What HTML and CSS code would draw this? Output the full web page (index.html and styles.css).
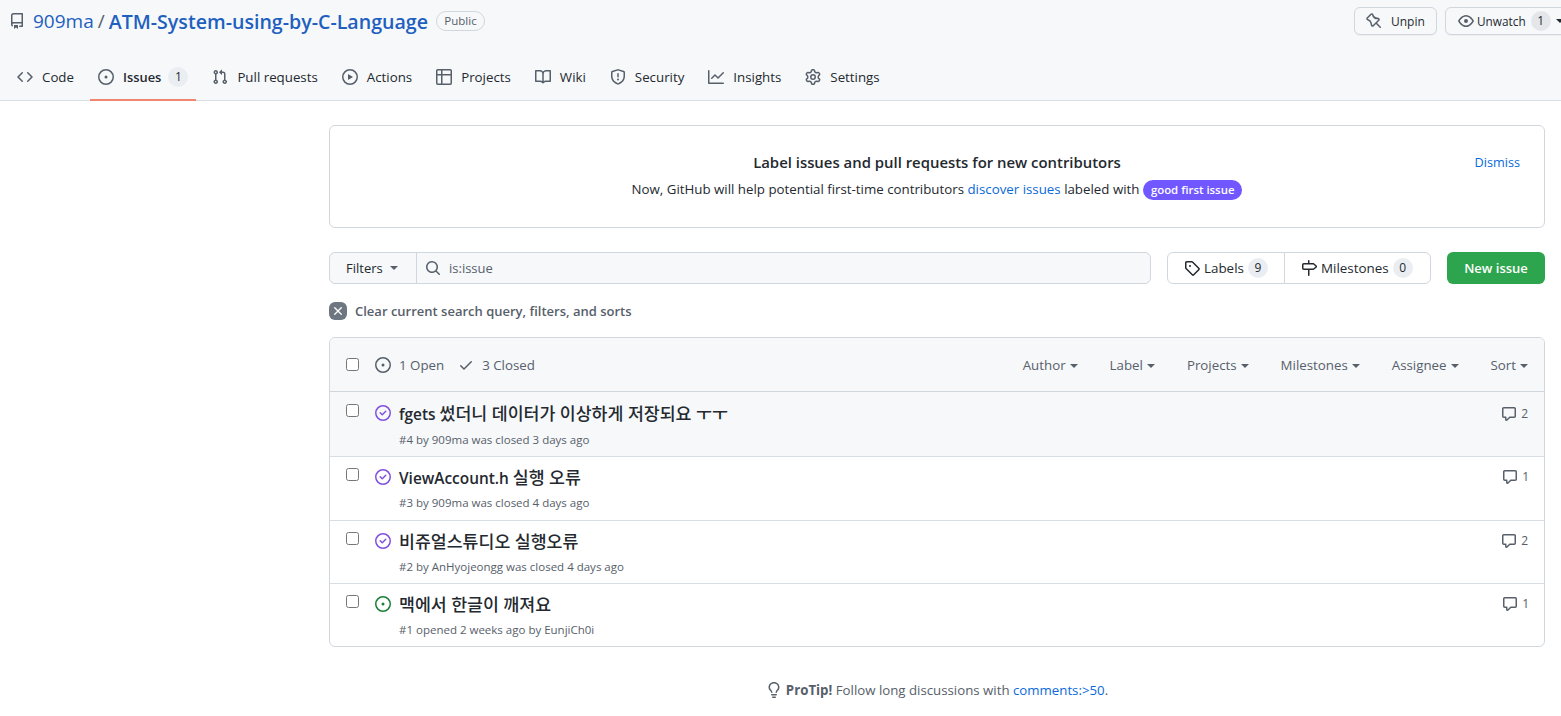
FILE: index.html
```html
<!DOCTYPE html>
<html lang="ko">
<head>
    <meta charset="UTF-8">
    <title>Issues - 909ma/ATM-System-using-by-C-Language</title>
    <link rel="stylesheet" href="styles.css">
</head>
<body>
    <!-- Icon sprite -->
    <svg class="sprite" xmlns="http://www.w3.org/2000/svg">
        <symbol id="i-repo" viewBox="0 0 16 16"><path fill-rule="evenodd" d="M2 2.5A2.5 2.5 0 014.5 0h8.75a.75.75 0 01.75.75v12.5a.75.75 0 01-.75.75h-2.5a.75.75 0 110-1.5h1.75v-2h-8a1 1 0 00-.714 1.7.75.75 0 01-1.072 1.05A2.495 2.495 0 012 11.5v-9zm10.5-1V9h-8c-.356 0-.694.074-1 .208V2.5a1 1 0 011-1h8zM5 12.25v3.25a.25.25 0 00.4.2l1.45-1.087a.25.25 0 01.3 0L8.6 15.7a.25.25 0 00.4-.2v-3.25a.25.25 0 00-.25-.25h-3.5a.25.25 0 00-.25.25z"/></symbol>
        <symbol id="i-code" viewBox="0 0 16 16"><path d="M4.72 3.22a.75.75 0 011.06 1.06L2.06 8l3.72 3.72a.75.75 0 11-1.06 1.06L.47 8.53a.75.75 0 010-1.06l4.25-4.25zm6.56 0a.75.75 0 10-1.06 1.06L13.94 8l-3.72 3.72a.75.75 0 101.06 1.06l4.25-4.25a.75.75 0 000-1.06l-4.25-4.25z"/></symbol>
        <symbol id="i-issue" viewBox="0 0 16 16"><path d="M8 9.5a1.5 1.5 0 100-3 1.5 1.5 0 000 3z"/><path fill-rule="evenodd" d="M8 0a8 8 0 100 16A8 8 0 008 0zM1.5 8a6.5 6.5 0 1113 0 6.5 6.5 0 01-13 0z"/></symbol>
        <symbol id="i-pr" viewBox="0 0 16 16"><path fill-rule="evenodd" d="M7.177 3.073L9.573.677A.25.25 0 0110 .854v4.792a.25.25 0 01-.427.177L7.177 3.427a.25.25 0 010-.354zM3.75 2.5a.75.75 0 100 1.5.75.75 0 000-1.5zm-2.25.75a2.25 2.25 0 113 2.122v5.256a2.251 2.251 0 11-1.5 0V5.372A2.25 2.25 0 011.5 3.25zM11 2.5h-1V4h1a1 1 0 011 1v5.628a2.251 2.251 0 101.5 0V5A2.5 2.5 0 0011 2.5zm1 10.25a.75.75 0 111.5 0 .75.75 0 01-1.5 0zM3.75 12a.75.75 0 100 1.5.75.75 0 000-1.5z"/></symbol>
        <symbol id="i-play" viewBox="0 0 16 16"><path fill-rule="evenodd" d="M1.5 8a6.5 6.5 0 1113 0 6.5 6.5 0 01-13 0zM8 0a8 8 0 100 16A8 8 0 008 0zM6.379 5.227A.25.25 0 006 5.442v5.117a.25.25 0 00.379.214l4.264-2.559a.25.25 0 000-.428L6.379 5.227z"/></symbol>
        <symbol id="i-table" viewBox="0 0 16 16"><path fill-rule="evenodd" d="M0 1.75C0 .784.784 0 1.75 0h12.5C15.216 0 16 .784 16 1.75v12.5A1.75 1.75 0 0114.25 16H1.75A1.75 1.75 0 010 14.25V1.75zM1.5 6.5v7.75c0 .138.112.25.25.25H5v-8H1.5zM5 5H1.5V1.75a.25.25 0 01.25-.25H5V5zm1.5 1.5v8h7.75a.25.25 0 00.25-.25V6.5h-8zm8-1.5h-8V1.5h7.75a.25.25 0 01.25.25V5z"/></symbol>
        <symbol id="i-book" viewBox="0 0 16 16"><path fill-rule="evenodd" d="M0 1.75A.75.75 0 01.75 1h4.253c1.227 0 2.317.59 3 1.501A3.744 3.744 0 0111.006 1h4.245a.75.75 0 01.75.75v10.5a.75.75 0 01-.75.75h-4.507a2.25 2.25 0 00-1.591.659l-.622.621a.75.75 0 01-1.06 0l-.622-.621A2.25 2.25 0 005.258 13H.75a.75.75 0 01-.75-.75V1.75zm8.755 3a2.25 2.25 0 012.25-2.25H14.5v9h-3.757c-.71 0-1.4.201-1.992.572l.004-7.322zm-1.504 7.324l.004-5.073-.002-2.253A2.25 2.25 0 005.003 2.5H1.5v9h3.757a3.75 3.75 0 011.994.574z"/></symbol>
        <symbol id="i-shield" viewBox="0 0 16 16"><path fill-rule="evenodd" d="M7.467.133a1.75 1.75 0 011.066 0l5.25 1.68A1.75 1.75 0 0115 3.48V7c0 1.566-.32 3.182-1.303 4.682-.983 1.498-2.585 2.813-5.032 3.855a1.7 1.7 0 01-1.33 0c-2.447-1.042-4.049-2.357-5.032-3.855C1.32 10.182 1 8.566 1 7V3.48a1.75 1.75 0 011.217-1.667l5.25-1.68zm.61 1.429a.25.25 0 00-.153 0l-5.25 1.68a.25.25 0 00-.174.238V7c0 1.358.275 2.666 1.057 3.86.784 1.194 2.121 2.34 4.366 3.297a.2.2 0 00.154 0c2.245-.956 3.582-2.104 4.366-3.298C13.225 9.666 13.5 8.36 13.5 7V3.48a.25.25 0 00-.174-.237l-5.25-1.68zM9 10.5a1 1 0 11-2 0 1 1 0 012 0zm-.25-5.75a.75.75 0 10-1.5 0v3a.75.75 0 001.5 0v-3z"/></symbol>
        <symbol id="i-graph" viewBox="0 0 16 16"><path d="M1.5 1.75a.75.75 0 00-1.5 0v12.5c0 .414.336.75.75.75h14.5a.75.75 0 000-1.5H1.5V1.75zm14.28 2.53a.75.75 0 00-1.06-1.06L10 7.94 7.53 5.47a.75.75 0 00-1.06 0L3.22 8.72a.75.75 0 001.06 1.06L7 7.06l2.47 2.47a.75.75 0 001.06 0l5.25-5.25z"/></symbol>
        <symbol id="i-gear" viewBox="0 0 16 16"><path fill-rule="evenodd" d="M7.429 1.525a6.593 6.593 0 011.142 0c.036.003.108.036.137.146l.289 1.105c.147.56.55.967.997 1.189.174.086.341.183.501.29.417.278.97.423 1.53.27l1.102-.303c.11-.03.175.016.195.046.219.31.41.641.573.989.014.031.022.11-.059.19l-.815.806c-.411.406-.562.957-.53 1.456a4.588 4.588 0 010 .582c-.032.499.119 1.05.53 1.456l.815.806c.08.08.073.159.059.19a6.494 6.494 0 01-.573.99c-.02.029-.086.074-.195.045l-1.103-.303c-.559-.153-1.112-.008-1.529.27-.16.107-.327.204-.5.29-.449.222-.851.628-.998 1.189l-.289 1.105c-.029.11-.101.143-.137.146a6.613 6.613 0 01-1.142 0c-.036-.003-.108-.037-.137-.146l-.289-1.105c-.147-.56-.55-.967-.997-1.189a4.502 4.502 0 01-.501-.29c-.417-.278-.97-.423-1.53-.27l-1.102.303c-.11.03-.175-.016-.195-.046a6.492 6.492 0 01-.573-.989c-.014-.031-.022-.11.059-.19l.815-.806c.411-.406.562-.957.53-1.456a4.587 4.587 0 010-.582c.032-.499-.119-1.05-.53-1.456l-.815-.806c-.08-.08-.073-.159-.059-.19a6.44 6.44 0 01.573-.99c.02-.029.086-.075.195-.045l1.103.303c.559.153 1.112.008 1.529-.27.16-.107.327-.204.5-.29.449-.222.851-.628.998-1.189l.289-1.105c.029-.11.101-.143.137-.146zM8 0c-.236 0-.47.01-.701.03-.743.065-1.29.615-1.458 1.261l-.29 1.106c-.017.066-.078.158-.211.224a5.994 5.994 0 00-.668.386c-.123.082-.233.09-.3.071L3.27 2.776c-.644-.177-1.392.02-1.82.63a7.977 7.977 0 00-.704 1.217c-.315.675-.111 1.422.363 1.891l.815.806c.05.048.098.147.088.294a6.084 6.084 0 000 .772c.01.147-.038.246-.088.294l-.815.806c-.474.469-.678 1.216-.363 1.891.2.428.436.835.704 1.218.428.609 1.176.806 1.82.63l1.103-.303c.066-.019.176-.011.299.071.213.143.436.272.668.386.133.066.194.158.212.224l.289 1.106c.169.646.715 1.196 1.458 1.26a8.094 8.094 0 001.402 0c.743-.064 1.29-.614 1.458-1.26l.29-1.106c.017-.066.078-.158.211-.224a5.98 5.98 0 00.668-.386c.123-.082.233-.09.3-.071l1.102.302c.644.177 1.392-.02 1.82-.63.268-.382.505-.789.704-1.217.315-.675.111-1.422-.364-1.891l-.814-.806c-.05-.048-.098-.147-.088-.294a6.1 6.1 0 000-.772c-.01-.147.039-.246.088-.294l.814-.806c.475-.469.679-1.216.364-1.891a7.992 7.992 0 00-.704-1.218c-.428-.609-1.176-.806-1.82-.63l-1.103.303c-.066.019-.176.011-.299-.071a5.991 5.991 0 00-.668-.386c-.133-.066-.194-.158-.212-.224L10.16 1.29C9.99.645 9.444.095 8.701.031A8.094 8.094 0 008 0zm1.5 8a1.5 1.5 0 11-3 0 1.5 1.5 0 013 0zM11 8a3 3 0 11-6 0 3 3 0 016 0z"/></symbol>
        <symbol id="i-pin" viewBox="0 0 16 16"><path fill-rule="evenodd" d="M4.456.734a1.75 1.75 0 012.826.504l.613 1.327a3.081 3.081 0 002.084 1.707l2.454.584c1.332.317 1.8 1.972.832 2.94L11.06 10l3.72 3.72a.75.75 0 11-1.061 1.06L10 11.06l-2.204 2.205c-.968.968-2.623.5-2.94-.832l-.584-2.454a3.081 3.081 0 00-1.707-2.084l-1.327-.613a1.75 1.75 0 01-.504-2.826L4.456.734zM5.92 1.866a.25.25 0 00-.404-.072L1.794 5.516a.25.25 0 00.072.404l1.328.613A4.582 4.582 0 015.73 9.63l.584 2.454a.25.25 0 00.42.12l5.47-5.47a.25.25 0 00-.12-.42L9.63 6.13a4.581 4.581 0 01-3.098-2.537L5.92 1.866z"/></symbol>
        <symbol id="i-eye" viewBox="0 0 16 16"><path fill-rule="evenodd" d="M1.679 7.932c.412-.621 1.242-1.75 2.366-2.717C5.175 4.242 6.527 3.5 8 3.5c1.473 0 2.824.742 3.955 1.715 1.124.967 1.954 2.096 2.366 2.717a.119.119 0 010 .136c-.412.621-1.242 1.75-2.366 2.717C10.825 11.758 9.473 12.5 8 12.5c-1.473 0-2.824-.742-3.955-1.715C2.92 9.818 2.09 8.69 1.679 8.068a.119.119 0 010-.136zM8 2c-1.981 0-3.67.992-4.933 2.078C1.797 5.169.88 6.423.43 7.1a1.619 1.619 0 000 1.798c.45.678 1.367 1.932 2.637 3.024C4.329 13.008 6.019 14 8 14c1.981 0 3.67-.992 4.933-2.078 1.27-1.091 2.187-2.345 2.637-3.023a1.619 1.619 0 000-1.798c-.45-.678-1.367-1.932-2.637-3.023C11.671 2.992 9.981 2 8 2zm0 8a2 2 0 100-4 2 2 0 000 4z"/></symbol>
        <symbol id="i-search" viewBox="0 0 16 16"><path fill-rule="evenodd" d="M11.5 7a4.499 4.499 0 11-8.998 0A4.499 4.499 0 0111.5 7zm-.82 4.74a6 6 0 111.06-1.06l3.04 3.04a.75.75 0 11-1.06 1.06l-3.04-3.04z"/></symbol>
        <symbol id="i-tag" viewBox="0 0 16 16"><path fill-rule="evenodd" d="M2.5 7.775V2.75a.25.25 0 01.25-.25h5.025a.25.25 0 01.177.073l6.25 6.25a.25.25 0 010 .354l-5.025 5.025a.25.25 0 01-.354 0l-6.25-6.25a.25.25 0 01-.073-.177zm-1.5 0V2.75C1 1.784 1.784 1 2.75 1h5.025c.464 0 .91.184 1.238.513l6.25 6.25a1.75 1.75 0 010 2.474l-5.026 5.026a1.75 1.75 0 01-2.474 0l-6.25-6.25A1.75 1.75 0 011 7.775zM6 5a1 1 0 100 2 1 1 0 000-2z"/></symbol>
        <symbol id="i-milestone" viewBox="0 0 16 16"><path fill-rule="evenodd" d="M7.75 0a.75.75 0 01.75.75V3h3.634c.414 0 .814.147 1.13.414l2.07 1.75a1.75 1.75 0 010 2.672l-2.07 1.75a1.75 1.75 0 01-1.13.414H8.5v5.25a.75.75 0 11-1.5 0V10H2.75A1.75 1.75 0 011 8.25v-3.5C1 3.784 1.784 3 2.75 3H7V.75A.75.75 0 017.75 0zm0 8.5h4.384a.25.25 0 00.161-.06l2.07-1.75a.25.25 0 000-.38l-2.07-1.75a.25.25 0 00-.161-.06H2.75a.25.25 0 00-.25.25v3.5c0 .138.112.25.25.25h5z"/></symbol>
        <symbol id="i-check" viewBox="0 0 16 16"><path fill-rule="evenodd" d="M13.78 4.22a.75.75 0 010 1.06l-7.25 7.25a.75.75 0 01-1.06 0L2.22 9.28a.75.75 0 011.06-1.06L6 10.94l6.72-6.72a.75.75 0 011.06 0z"/></symbol>
        <symbol id="i-closed" viewBox="0 0 16 16"><path d="M11.28 6.78a.75.75 0 00-1.06-1.06L7.25 8.69 5.78 7.22a.75.75 0 00-1.06 1.06l2 2a.75.75 0 001.06 0l3.5-3.5z"/><path fill-rule="evenodd" d="M16 8A8 8 0 110 8a8 8 0 0116 0zm-1.5 0a6.5 6.5 0 11-13 0 6.5 6.5 0 0113 0z"/></symbol>
        <symbol id="i-comment" viewBox="0 0 16 16"><path fill-rule="evenodd" d="M2.75 2.5a.25.25 0 00-.25.25v7.5c0 .138.112.25.25.25h2a.75.75 0 01.75.75v2.19l2.72-2.72a.75.75 0 01.53-.22h4.5a.25.25 0 00.25-.25v-7.5a.25.25 0 00-.25-.25H2.75zM1 2.75C1 1.784 1.784 1 2.75 1h10.5c.966 0 1.75.784 1.75 1.75v7.5A1.75 1.75 0 0113.25 12H9.06l-2.573 2.573A1.457 1.457 0 014 13.543V12H2.75A1.75 1.75 0 011 10.25v-7.5z"/></symbol>
        <symbol id="i-bulb" viewBox="0 0 16 16"><path fill-rule="evenodd" d="M8 1.5c-2.363 0-4 1.69-4 3.75 0 .984.424 1.625.984 2.304l.214.253c.223.264.47.556.673.848.284.411.537.896.621 1.49a.75.75 0 01-1.484.211c-.04-.282-.163-.547-.37-.847a8.695 8.695 0 00-.542-.68c-.084-.1-.173-.205-.268-.32C3.201 7.75 2.5 6.766 2.5 5.25 2.5 2.31 4.863 0 8 0s5.5 2.31 5.5 5.25c0 1.516-.701 2.5-1.328 3.259-.095.115-.184.22-.268.319-.207.245-.383.453-.541.681-.208.3-.33.565-.37.847a.75.75 0 01-1.485-.212c.084-.593.337-1.078.621-1.489.203-.292.45-.584.673-.848.075-.088.147-.173.213-.253.561-.679.985-1.32.985-2.304 0-2.06-1.637-3.75-4-3.75zM6 15.25a.75.75 0 01.75-.75h2.5a.75.75 0 010 1.5h-2.5a.75.75 0 01-.75-.75zM5.75 12a.75.75 0 000 1.5h4.5a.75.75 0 000-1.5h-4.5z"/></symbol>
    </svg>

    <!-- Repository header -->
    <header class="repo-head">
        <div class="repo-title">
            <div class="repo-name">
                <svg class="icon icon-repo"><use href="#i-repo"/></svg>
                <a class="owner" href="#">909ma</a>
                <span class="slash">/</span>
                <a class="name" href="#">ATM-System-using-by-C-Language</a>
                <span class="public">Public</span>
            </div>
            <div class="repo-actions">
                <span class="btn-small btn-unpin"><svg class="icon"><use href="#i-pin"/></svg>Unpin</span>
                <span class="btn-small btn-watch"><svg class="icon"><use href="#i-eye"/></svg>Unwatch<span class="counter counter-dark">1</span><i class="caret"></i></span>
            </div>
        </div>
        <nav class="tabs">
            <a class="tab" href="#"><svg class="icon"><use href="#i-code"/></svg>Code</a>
            <a class="tab active" href="#"><svg class="icon"><use href="#i-issue"/></svg>Issues<span class="counter">1</span></a>
            <a class="tab" href="#"><svg class="icon"><use href="#i-pr"/></svg>Pull requests</a>
            <a class="tab" href="#"><svg class="icon"><use href="#i-play"/></svg>Actions</a>
            <a class="tab" href="#"><svg class="icon"><use href="#i-table"/></svg>Projects</a>
            <a class="tab" href="#"><svg class="icon"><use href="#i-book"/></svg>Wiki</a>
            <a class="tab" href="#"><svg class="icon"><use href="#i-shield"/></svg>Security</a>
            <a class="tab" href="#"><svg class="icon"><use href="#i-graph"/></svg>Insights</a>
            <a class="tab" href="#"><svg class="icon"><use href="#i-gear"/></svg>Settings</a>
        </nav>
    </header>

    <main class="content">
        <!-- Contributor banner -->
        <section class="banner">
            <h2>Label issues and pull requests for new contributors</h2>
            <p>Now, GitHub will help potential first-time contributors <a href="#">discover issues</a> labeled with <span class="good-first">good first issue</span></p>
            <a class="dismiss" href="#">Dismiss</a>
        </section>

        <!-- Filters and search -->
        <div class="toolbar">
            <div class="search-group">
                <span class="filters">Filters<i class="caret"></i></span>
                <div class="search">
                    <svg class="icon"><use href="#i-search"/></svg>
                    <span>is:issue</span>
                </div>
            </div>
            <div class="label-group">
                <a class="lm lm-labels" href="#"><svg class="icon"><use href="#i-tag"/></svg>Labels<span class="counter">9</span></a>
                <a class="lm lm-miles" href="#"><svg class="icon"><use href="#i-milestone"/></svg>Milestones<span class="counter">0</span></a>
            </div>
            <a class="new-issue" href="#">New issue</a>
        </div>

        <a class="clear-query" href="#">
            <span class="clear-x"><svg viewBox="0 0 16 16" width="14" height="14"><path fill-rule="evenodd" d="M3.72 3.72a.75.75 0 011.06 0L8 6.94l3.22-3.22a.75.75 0 111.06 1.06L9.06 8l3.22 3.22a.75.75 0 11-1.06 1.06L8 9.06l-3.22 3.22a.75.75 0 01-1.06-1.06L6.94 8 3.72 4.78a.75.75 0 010-1.06z"/></svg></span>
            Clear current search query, filters, and sorts
        </a>

        <!-- Issue list -->
        <section class="box">
            <div class="box-head">
                <span class="check"></span>
                <span class="state state-open"><svg class="icon"><use href="#i-issue"/></svg>1 Open</span>
                <span class="state state-closed"><svg class="icon"><use href="#i-check"/></svg>3 Closed</span>
                <div class="sorts">
                    <span>Author<i class="caret"></i></span>
                    <span>Label<i class="caret"></i></span>
                    <span>Projects<i class="caret"></i></span>
                    <span>Milestones<i class="caret"></i></span>
                    <span>Assignee<i class="caret"></i></span>
                    <span>Sort<i class="caret"></i></span>
                </div>
            </div>

            <article class="issue hovered">
                <span class="check"></span>
                <svg class="icon icon-closed"><use href="#i-closed"/></svg>
                <div class="issue-main">
                    <a class="issue-title" href="#">fgets <span class="ko">썼더니 데이터가 이상하게 저장되요 ㅜㅜ</span></a>
                    <div class="issue-meta">#4 by 909ma was closed 3 days ago</div>
                </div>
                <span class="comments"><svg class="icon"><use href="#i-comment"/></svg>2</span>
            </article>
            <article class="issue tall">
                <span class="check"></span>
                <svg class="icon icon-closed"><use href="#i-closed"/></svg>
                <div class="issue-main">
                    <a class="issue-title" href="#">ViewAccount.h <span class="ko">실행 오류</span></a>
                    <div class="issue-meta">#3 by 909ma was closed 4 days ago</div>
                </div>
                <span class="comments one"><svg class="icon"><use href="#i-comment"/></svg>1</span>
            </article>
            <article class="issue">
                <span class="check"></span>
                <svg class="icon icon-closed"><use href="#i-closed"/></svg>
                <div class="issue-main">
                    <a class="issue-title" href="#"><span class="ko">비쥬얼스튜디오 실행오류</span></a>
                    <div class="issue-meta">#2 by AnHyojeongg was closed 4 days ago</div>
                </div>
                <span class="comments"><svg class="icon"><use href="#i-comment"/></svg>2</span>
            </article>
            <article class="issue">
                <span class="check"></span>
                <svg class="icon icon-open"><use href="#i-issue"/></svg>
                <div class="issue-main">
                    <a class="issue-title" href="#"><span class="ko">맥에서 한글이 깨져요</span></a>
                    <div class="issue-meta">#1 opened 2 weeks ago by EunjiCh0i</div>
                </div>
                <span class="comments one"><svg class="icon"><use href="#i-comment"/></svg>1</span>
            </article>
        </section>

        <p class="protip"><svg class="icon"><use href="#i-bulb"/></svg><strong>ProTip!</strong> Follow long discussions with <a href="#">comments:&gt;50</a>.</p>
    </main>
</body>
</html>
```

FILE: styles.css
```css
/* Reset */
* {
    margin: 0;
    padding: 0;
    box-sizing: border-box;
}

html, body {
    height: 100%;
    overflow: hidden;
}

body {
    background-color: #ffffff;
    color: #24292f;
    font-family: "Open Sans", "Noto Sans CJK KR", sans-serif;
    font-size: 13px;
}

a {
    color: inherit;
    text-decoration: none;
}

.sprite {
    display: none;
}

.icon {
    width: 16px;
    height: 16px;
    flex: none;
    fill: currentColor;
}

.caret {
    display: inline-block;
    margin-left: 4px;
    border-top: 4px solid currentColor;
    border-left: 4px solid transparent;
    border-right: 4px solid transparent;
    vertical-align: middle;
}

.counter {
    display: inline-block;
    min-width: 20px;
    height: 20px;
    margin-left: 7px;
    border-radius: 10px;
    background-color: #eaeef2;
    color: #24292f;
    font-size: 12px;
    font-weight: 400;
    line-height: 20px;
    text-align: center;
}

/* Repository header */
.repo-head {
    height: 101px;
    background-color: #f6f8fa;
    border-bottom: 1px solid #d8dee4;
}

.repo-title {
    display: flex;
    justify-content: space-between;
    height: 54px;
    padding: 7px 0 0 9px;
}

.repo-name {
    display: flex;
    align-items: center;
    height: 28px;
    font-size: 19px;
}

.icon-repo {
    margin-right: 8px;
    color: #57606a;
}

.repo-name .owner {
    color: #1f5fbf;
}

.repo-name .slash {
    margin: 0 4px;
    color: #57606a;
}

.repo-name .name {
    color: #1f5fbf;
    font-size: 19.6px;
    font-weight: 600;
}

.public {
    margin-left: 8px;
    width: 49px;
    height: 20px;
    border: 1px solid #d0d7de;
    border-radius: 10px;
    color: #57606a;
    font-size: 11.5px;
    font-weight: 500;
    line-height: 18px;
    text-align: center;
}

.repo-actions {
    display: flex;
    gap: 8px;
    margin-right: -16px;
}

.btn-small {
    display: flex;
    align-items: center;
    height: 28px;
    background-color: #f6f8fa;
    border: 1px solid #d0d7de;
    border-radius: 6px;
    font-size: 12px;
    font-weight: 500;
    box-shadow: 0 1px 0 rgba(27,31,36,0.04);
}

.btn-small .icon {
    color: #57606a;
}

.btn-unpin {
    width: 83px;
    padding-left: 11px;
}

.btn-unpin .icon {
    margin-right: 9px;
}

.btn-watch {
    width: 132px;
    padding-left: 12px;
    font-size: 11.8px;
}

.btn-watch .icon {
    margin-right: 3px;
}

.btn-watch .counter {
    margin-left: 5px;
}

.btn-watch .caret {
    margin-left: 5px;
}

.counter-dark {
    background-color: #e4e6e9;
}

.tabs {
    display: flex;
    gap: 8px;
    padding-left: 9px;
}

.tab {
    display: flex;
    align-items: center;
    height: 47px;
    padding: 0 8px;
    font-size: 13.3px;
    border-bottom: 2px solid transparent;
}

.tab .icon {
    margin-right: 9px;
    color: #57606a;
}

.tab.active {
    border-bottom-color: #f0866e;
    font-size: 12.9px;
    font-weight: 600;
}

/* Main column */
.content {
    padding: 24px 16px 0 329px;
}

.banner {
    position: relative;
    height: 103px;
    padding-top: 26px;
    border: 1px solid #d0d7de;
    border-radius: 6px;
    text-align: center;
}

.banner h2 {
    font-size: 14.9px;
    font-weight: 600;
    line-height: 21px;
}

.banner p {
    margin-top: 6px;
    font-size: 13.3px;
    line-height: 20px;
}

.banner p a,
.dismiss,
.protip a {
    color: #0969da;
}

.good-first {
    display: inline-block;
    padding: 0 8px;
    border-radius: 10px;
    background-color: #7057ff;
    color: #ffffff;
    font-size: 11.4px;
    font-weight: 600;
    line-height: 20px;
}

.dismiss {
    position: absolute;
    top: 27px;
    right: 24px;
    font-size: 12.7px;
}

.toolbar {
    display: flex;
    height: 32px;
    margin-top: 24px;
}

.search-group {
    display: flex;
    width: 822px;
    border: 1px solid #d0d7de;
    border-radius: 6px;
    background-color: #f6f8fa;
}

.filters {
    display: flex;
    align-items: center;
    width: 87px;
    padding-left: 16px;
    border-right: 1px solid #d0d7de;
    font-weight: 500;
}

.filters .caret {
    margin-left: 7px;
    color: #57606a;
}

.search {
    display: flex;
    align-items: center;
    gap: 8px;
    padding-left: 8px;
    color: #57606a;
}

.label-group {
    display: flex;
    width: 264px;
    margin-left: 16px;
    border: 1px solid #d0d7de;
    border-radius: 6px;
    font-size: 13.4px;
}

.lm {
    display: flex;
    align-items: center;
    font-weight: 500;
}

.lm .icon {
    margin-right: 4px;
}

.lm-labels {
    width: 117px;
    padding-left: 16px;
    border-right: 1px solid #d0d7de;
}

.lm .counter {
    margin-left: 4px;
}

.lm-miles {
    padding-left: 16px;
}

.new-issue {
    width: 98px;
    margin-left: 16px;
    border-radius: 6px;
    background-color: #2da44e;
    color: #ffffff;
    font-weight: 600;
    line-height: 32px;
    text-align: center;
}

.clear-query {
    display: flex;
    align-items: center;
    gap: 8px;
    height: 18px;
    margin-top: 18px;
    color: #57606a;
    font-weight: 600;
}

.clear-x {
    display: flex;
    align-items: center;
    justify-content: center;
    width: 18px;
    height: 18px;
    border-radius: 6px;
    background-color: #6e7781;
    fill: #ffffff;
}

.box {
    margin-top: 17px;
    border: 1px solid #d0d7de;
    border-radius: 6px;
    overflow: hidden;
}

.box-head {
    display: flex;
    align-items: center;
    height: 54px;
    padding: 0 16px;
    background-color: #f6f8fa;
    border-bottom: 1px solid #d0d7de;
    color: #57606a;
    font-size: 13.3px;
}

.check {
    flex: none;
    width: 13px;
    height: 13px;
    background-color: #ffffff;
    border: 1px solid #767676;
    border-radius: 2.5px;
}

.state {
    display: flex;
    align-items: center;
}

.state .icon {
    margin-right: 8px;
}

.state-open {
    margin-left: 16px;
}

.state-closed {
    margin-left: 14px;
}

.sorts {
    display: flex;
    gap: 32px;
    margin-left: auto;
}

.issue {
    display: flex;
    align-items: flex-start;
    height: 63px;
    padding: 10px 16px 0;
    border-bottom: 1px solid #d8dee4;
}

.issue.tall {
    height: 64px;
}

.issue:last-child {
    height: 62px;
    border-bottom: 0;
}

.issue.hovered {
    height: 65px;
    padding-top: 11px;
    background-color: #f6f8fa;
}

.issue > .check {
    margin-top: 1px;
}

.issue > .icon {
    margin: 2px 0 0 16px;
}

.icon-closed {
    color: #8250df;
}

.icon-open {
    color: #1a7f37;
}

.issue-main {
    margin-left: 8px;
}

.issue-title {
    display: block;
    font-size: 15.4px;
    font-weight: 600;
    line-height: 22px;
}

.issue-title .ko {
    font-size: 17.3px;
    font-weight: 500;
}

.issue-meta {
    margin-top: 4px;
    color: #57606a;
    font-size: 11.5px;
    line-height: 18px;
}

.hovered .issue-meta {
    margin-top: 5px;
}

.comments {
    display: flex;
    align-items: center;
    gap: 4px;
    margin-left: auto;
    padding-top: 1px;
    color: #57606a;
    font-size: 12px;
}

.hovered .comments {
    padding-top: 2px;
}

.comments.one {
    margin-right: -1px;
}

.protip {
    display: flex;
    align-items: center;
    justify-content: center;
    margin-top: 34px;
    color: #57606a;
    font-size: 13.25px;
    white-space: pre;
}

.protip .icon {
    margin-right: 4px;
}
```
